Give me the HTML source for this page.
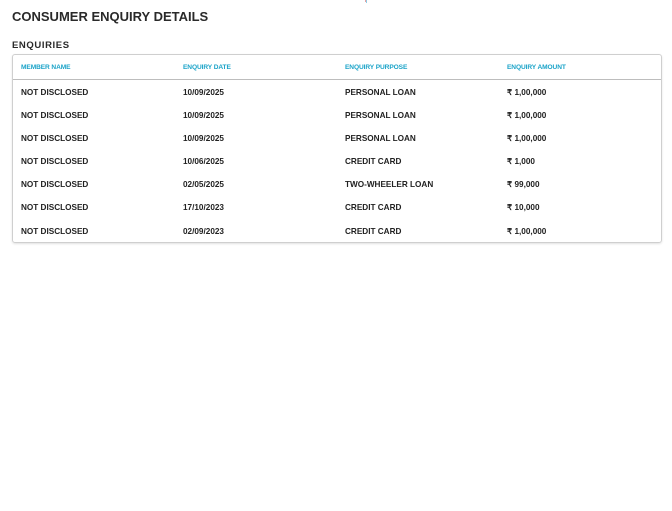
<!DOCTYPE html>
<html><head><meta charset="utf-8"><style>
html,body{margin:0;padding:0;background:#fff;width:672px;height:511px;overflow:hidden;font-family:"Liberation Sans",sans-serif;}
.mark{position:absolute;left:366px;top:0;width:1px;height:3px;background:#8fcbe6;}
.mark2{position:absolute;left:365px;top:0;width:1px;height:2px;background:#e8a0a0;}
h1{position:absolute;left:12px;top:9px;margin:0;font-size:13px;font-weight:bold;color:#2a2a2a;}
h2{position:absolute;left:12px;top:40px;margin:0;font-size:9.5px;font-weight:bold;color:#2a2a2a;letter-spacing:0.6px;}
.box{position:absolute;left:12px;top:54px;width:648px;height:187px;border:1px solid #cfcfcf;border-radius:3px;box-shadow:0 1px 2px rgba(0,0,0,0.12);}
.hdr{position:absolute;left:0;top:0;width:648px;height:24px;border-bottom:1px solid #bdbdbd;}
.c{position:absolute;font-weight:bold;white-space:nowrap;line-height:10px;top:0;}
.h{color:#1aa3c8;top:8px;font-size:6.6px;letter-spacing:-0.1px;}
.r{color:#222;font-size:8.2px;}
</style></head><body>
<div class="mark2"></div><div class="mark"></div>
<h1>CONSUMER ENQUIRY DETAILS</h1>
<h2>ENQUIRIES</h2>
<div class="box">
<div class="hdr">
<span class="c h" style="left:8px">MEMBER NAME</span>
<span class="c h" style="left:170px">ENQUIRY DATE</span>
<span class="c h" style="left:332px">ENQUIRY PURPOSE</span>
<span class="c h" style="left:494px">ENQUIRY AMOUNT</span>
</div>
<div style="position:absolute;top:33px;left:0">
<span class="c r" style="left:8px">NOT DISCLOSED</span><span class="c r" style="left:170px">10/09/2025</span><span class="c r" style="left:332px">PERSONAL LOAN</span><span class="c r" style="left:494px">₹ 1,00,000</span></div>
<div style="position:absolute;top:56px;left:0">
<span class="c r" style="left:8px">NOT DISCLOSED</span><span class="c r" style="left:170px">10/09/2025</span><span class="c r" style="left:332px">PERSONAL LOAN</span><span class="c r" style="left:494px">₹ 1,00,000</span></div>
<div style="position:absolute;top:79px;left:0">
<span class="c r" style="left:8px">NOT DISCLOSED</span><span class="c r" style="left:170px">10/09/2025</span><span class="c r" style="left:332px">PERSONAL LOAN</span><span class="c r" style="left:494px">₹ 1,00,000</span></div>
<div style="position:absolute;top:102px;left:0">
<span class="c r" style="left:8px">NOT DISCLOSED</span><span class="c r" style="left:170px">10/06/2025</span><span class="c r" style="left:332px">CREDIT CARD</span><span class="c r" style="left:494px">₹ 1,000</span></div>
<div style="position:absolute;top:125px;left:0">
<span class="c r" style="left:8px">NOT DISCLOSED</span><span class="c r" style="left:170px">02/05/2025</span><span class="c r" style="left:332px">TWO-WHEELER LOAN</span><span class="c r" style="left:494px">₹ 99,000</span></div>
<div style="position:absolute;top:148px;left:0">
<span class="c r" style="left:8px">NOT DISCLOSED</span><span class="c r" style="left:170px">17/10/2023</span><span class="c r" style="left:332px">CREDIT CARD</span><span class="c r" style="left:494px">₹ 10,000</span></div>
<div style="position:absolute;top:172px;left:0">
<span class="c r" style="left:8px">NOT DISCLOSED</span><span class="c r" style="left:170px">02/09/2023</span><span class="c r" style="left:332px">CREDIT CARD</span><span class="c r" style="left:494px">₹ 1,00,000</span></div>
</div>
</body></html>
